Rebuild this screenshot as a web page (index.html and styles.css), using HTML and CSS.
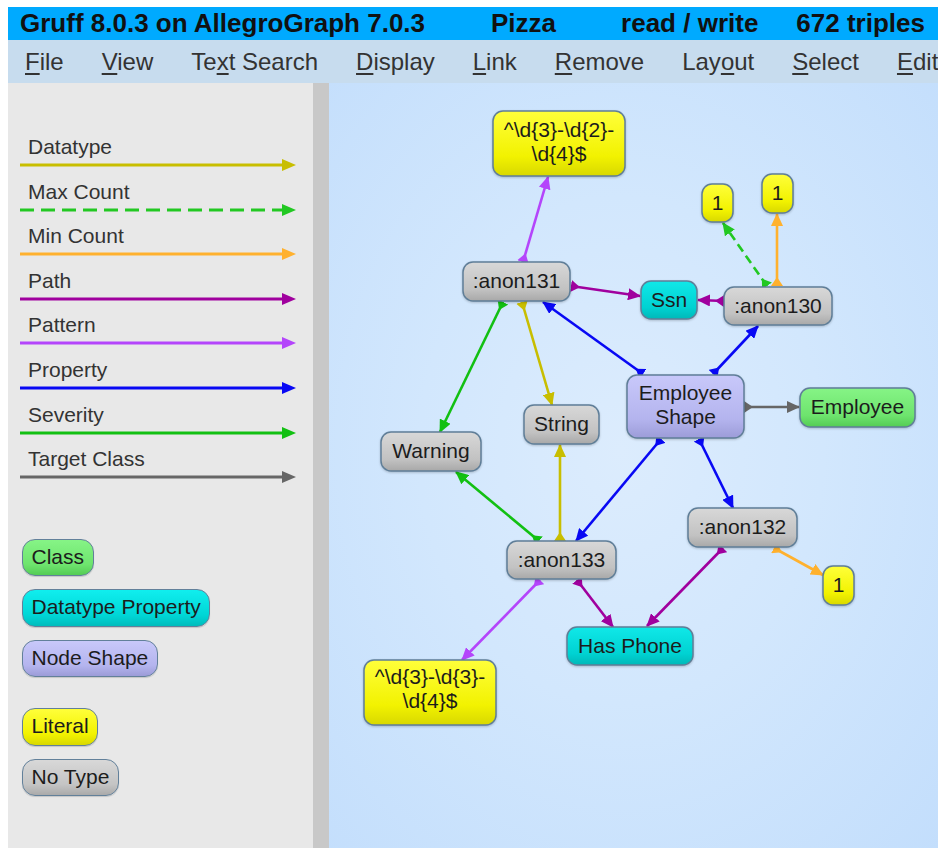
FILE: index.html
```html
<!DOCTYPE html>
<html lang="en">
<head>
    <link rel="stylesheet" href="styles.css">
    <meta charset="UTF-8">
    <title>Gruff - Pizza</title>
</head>
<body>
<div class="app">
    <div class="titlebar">
        <span>Gruff 8.0.3 on AllegroGraph 7.0.3</span>
        <span class="repo">Pizza</span>
        <span class="mode">read / write</span>
        <span class="count">672 triples</span>
    </div>
    <div class="menubar">
        <span><u>F</u>ile</span>
        <span><u>V</u>iew</span>
        <span>Te<u>x</u>t Search</span>
        <span><u>D</u>isplay</span>
        <span><u>L</u>ink</span>
        <span><u>R</u>emove</span>
        <span>Lay<u>o</u>ut</span>
        <span><u>S</u>elect</span>
        <span><u>E</u>dit</span>
    </div>
    <div class="main">
        <div class="legend">
            <div class="edge-key">
                <span>Datatype</span>
                <svg width="278" height="14"><line x1="0" y1="7" x2="264" y2="7" class="k-olive"/><polygon points="262,1 276,7 262,13" class="f-olive"/></svg>
            </div>
            <div class="edge-key">
                <span>Max Count</span>
                <svg width="278" height="14"><line x1="0" y1="7" x2="264" y2="7" class="k-max"/><polygon points="262,1 276,7 262,13" class="f-max"/></svg>
            </div>
            <div class="edge-key">
                <span>Min Count</span>
                <svg width="278" height="14"><line x1="0" y1="7" x2="264" y2="7" class="k-orange"/><polygon points="262,1 276,7 262,13" class="f-orange"/></svg>
            </div>
            <div class="edge-key">
                <span>Path</span>
                <svg width="278" height="14"><line x1="0" y1="7" x2="264" y2="7" class="k-path"/><polygon points="262,1 276,7 262,13" class="f-path"/></svg>
            </div>
            <div class="edge-key">
                <span>Pattern</span>
                <svg width="278" height="14"><line x1="0" y1="7" x2="264" y2="7" class="k-violet"/><polygon points="262,1 276,7 262,13" class="f-violet"/></svg>
            </div>
            <div class="edge-key">
                <span>Property</span>
                <svg width="278" height="14"><line x1="0" y1="7" x2="264" y2="7" class="k-blue"/><polygon points="262,1 276,7 262,13" class="f-blue"/></svg>
            </div>
            <div class="edge-key">
                <span>Severity</span>
                <svg width="278" height="14"><line x1="0" y1="7" x2="264" y2="7" class="k-green"/><polygon points="262,1 276,7 262,13" class="f-green"/></svg>
            </div>
            <div class="edge-key">
                <span>Target Class</span>
                <svg width="278" height="14"><line x1="0" y1="7" x2="264" y2="7" class="k-gray"/><polygon points="262,1 276,7 262,13" class="f-gray"/></svg>
            </div>

            <div class="type-keys">
                <div class="pill p-class">Class</div>
                <div class="pill p-dprop">Datatype Property</div>
                <div class="pill p-shape">Node Shape</div>
                <div class="pill p-lit gap-before">Literal</div>
                <div class="pill p-none">No Type</div>
            </div>
        </div>
        <div class="scrollbar"></div>
        <div class="canvas">
            <svg class="graph" width="609" height="765" viewBox="329 83 609 765">
                <defs>
                    <linearGradient id="g-lit" x1="0" y1="0" x2="0" y2="1"><stop offset="0" stop-color="#ffff3a"/><stop offset="0.7" stop-color="#f2f200"/><stop offset="1" stop-color="#d8d800"/></linearGradient>
                    <linearGradient id="g-none" x1="0" y1="0" x2="0" y2="1"><stop offset="0" stop-color="#d8d8d8"/><stop offset="0.7" stop-color="#c2c2c2"/><stop offset="1" stop-color="#a8a8a8"/></linearGradient>
                    <linearGradient id="g-dprop" x1="0" y1="0" x2="0" y2="1"><stop offset="0" stop-color="#10e8e8"/><stop offset="0.7" stop-color="#00d2d2"/><stop offset="1" stop-color="#00b8b8"/></linearGradient>
                    <linearGradient id="g-shape" x1="0" y1="0" x2="0" y2="1"><stop offset="0" stop-color="#c8c8fa"/><stop offset="0.7" stop-color="#b4b4ee"/><stop offset="1" stop-color="#9c9cd8"/></linearGradient>
                    <linearGradient id="g-class" x1="0" y1="0" x2="0" y2="1"><stop offset="0" stop-color="#86f486"/><stop offset="0.7" stop-color="#6ee46e"/><stop offset="1" stop-color="#54cc54"/></linearGradient>

                    <marker id="a-olive" viewBox="0 0 13 12" refX="12" refY="6" markerWidth="13" markerHeight="12" markerUnits="userSpaceOnUse" orient="auto"><path d="M0,0 L13,6 L0,12 z" fill="#c8be00"/></marker>
                    <marker id="t-olive" viewBox="0 0 9 12" refX="0" refY="6" markerWidth="9" markerHeight="12" markerUnits="userSpaceOnUse" orient="auto"><path d="M0,0 L9,6 L0,12 z" fill="#c8be00"/></marker>
                    <marker id="a-max" viewBox="0 0 13 12" refX="12" refY="6" markerWidth="13" markerHeight="12" markerUnits="userSpaceOnUse" orient="auto"><path d="M0,0 L13,6 L0,12 z" fill="#22c822"/></marker>
                    <marker id="t-max" viewBox="0 0 9 12" refX="0" refY="6" markerWidth="9" markerHeight="12" markerUnits="userSpaceOnUse" orient="auto"><path d="M0,0 L9,6 L0,12 z" fill="#22c822"/></marker>
                    <marker id="a-orange" viewBox="0 0 13 12" refX="12" refY="6" markerWidth="13" markerHeight="12" markerUnits="userSpaceOnUse" orient="auto"><path d="M0,0 L13,6 L0,12 z" fill="#ffb12e"/></marker>
                    <marker id="t-orange" viewBox="0 0 9 12" refX="0" refY="6" markerWidth="9" markerHeight="12" markerUnits="userSpaceOnUse" orient="auto"><path d="M0,0 L9,6 L0,12 z" fill="#ffb12e"/></marker>
                    <marker id="a-path" viewBox="0 0 13 12" refX="12" refY="6" markerWidth="13" markerHeight="12" markerUnits="userSpaceOnUse" orient="auto"><path d="M0,0 L13,6 L0,12 z" fill="#a0009e"/></marker>
                    <marker id="t-path" viewBox="0 0 9 12" refX="0" refY="6" markerWidth="9" markerHeight="12" markerUnits="userSpaceOnUse" orient="auto"><path d="M0,0 L9,6 L0,12 z" fill="#a0009e"/></marker>
                    <marker id="a-violet" viewBox="0 0 13 12" refX="12" refY="6" markerWidth="13" markerHeight="12" markerUnits="userSpaceOnUse" orient="auto"><path d="M0,0 L13,6 L0,12 z" fill="#b445fb"/></marker>
                    <marker id="t-violet" viewBox="0 0 9 12" refX="0" refY="6" markerWidth="9" markerHeight="12" markerUnits="userSpaceOnUse" orient="auto"><path d="M0,0 L9,6 L0,12 z" fill="#b445fb"/></marker>
                    <marker id="a-blue" viewBox="0 0 13 12" refX="12" refY="6" markerWidth="13" markerHeight="12" markerUnits="userSpaceOnUse" orient="auto"><path d="M0,0 L13,6 L0,12 z" fill="#0808f4"/></marker>
                    <marker id="t-blue" viewBox="0 0 9 12" refX="0" refY="6" markerWidth="9" markerHeight="12" markerUnits="userSpaceOnUse" orient="auto"><path d="M0,0 L9,6 L0,12 z" fill="#0808f4"/></marker>
                    <marker id="a-green" viewBox="0 0 13 12" refX="12" refY="6" markerWidth="13" markerHeight="12" markerUnits="userSpaceOnUse" orient="auto"><path d="M0,0 L13,6 L0,12 z" fill="#12c012"/></marker>
                    <marker id="t-green" viewBox="0 0 9 12" refX="0" refY="6" markerWidth="9" markerHeight="12" markerUnits="userSpaceOnUse" orient="auto"><path d="M0,0 L9,6 L0,12 z" fill="#12c012"/></marker>
                    <marker id="a-gray" viewBox="0 0 13 12" refX="12" refY="6" markerWidth="13" markerHeight="12" markerUnits="userSpaceOnUse" orient="auto"><path d="M0,0 L13,6 L0,12 z" fill="#666666"/></marker>
                    <marker id="t-gray" viewBox="0 0 9 12" refX="0" refY="6" markerWidth="9" markerHeight="12" markerUnits="userSpaceOnUse" orient="auto"><path d="M0,0 L9,6 L0,12 z" fill="#666666"/></marker>
                </defs>

                <!-- edges -->
                <line class="e e-violet" x1="523" y1="262" x2="548" y2="177"/>
                <line class="e e-path" x1="571" y1="286" x2="640" y2="296"/>
                <line class="e e-path" x1="724" y1="301" x2="698" y2="300"/>
                <line class="e e-max" x1="767" y1="286" x2="723" y2="223"/>
                <line class="e e-orange" x1="777" y1="286" x2="777" y2="214"/>
                <line class="e e-blue" x1="643" y1="374" x2="543" y2="302"/>
                <line class="e e-blue" x1="713" y1="374" x2="758" y2="326"/>
                <line class="e e-gray" x1="744" y1="407" x2="799" y2="407"/>
                <line class="e e-blue" x1="661" y1="439" x2="576" y2="541"/>
                <line class="e e-blue" x1="699" y1="439" x2="733" y2="508"/>
                <line class="e e-green" x1="503" y1="302" x2="440" y2="432"/>
                <line class="e e-olive" x1="522" y1="302" x2="552" y2="405"/>
                <line class="e e-green" x1="539" y1="541" x2="456" y2="472"/>
                <line class="e e-olive" x1="560" y1="541" x2="560" y2="445"/>
                <line class="e e-violet" x1="540" y1="580" x2="462" y2="660"/>
                <line class="e e-path" x1="577" y1="580" x2="613" y2="627"/>
                <line class="e e-path" x1="723" y1="548" x2="647" y2="626"/>
                <line class="e e-orange" x1="774" y1="548" x2="823" y2="575"/>

                <!-- nodes -->
                <rect class="node n-lit" x="493" y="111" width="132" height="65" rx="10"/>
                <text class="label" x="559" y="137">^\d{3}-\d{2}-</text>
                <text class="label" x="559" y="161">\d{4}$</text>

                <rect class="node n-none" x="463" y="262" width="107" height="39" rx="10"/>
                <text class="label" x="516.5" y="288">:anon131</text>

                <rect class="node n-dprop" x="641" y="281" width="56" height="38" rx="10"/>
                <text class="label" x="669" y="307">Ssn</text>

                <rect class="node n-none" x="724" y="287" width="108" height="38" rx="10"/>
                <text class="label" x="778" y="313">:anon130</text>

                <rect class="node n-lit" x="702" y="184" width="31" height="38" rx="10"/>
                <text class="label" x="717.5" y="210">1</text>

                <rect class="node n-lit" x="762" y="174" width="31" height="39" rx="10"/>
                <text class="label" x="777.5" y="200">1</text>

                <rect class="node n-shape" x="627" y="375" width="117" height="63" rx="10"/>
                <text class="label" x="685.5" y="400">Employee</text>
                <text class="label" x="685.5" y="424">Shape</text>

                <rect class="node n-class" x="800" y="388" width="115" height="39" rx="10"/>
                <text class="label" x="857.5" y="414">Employee</text>

                <rect class="node n-none" x="524" y="405" width="75" height="39" rx="10"/>
                <text class="label" x="561.5" y="431">String</text>

                <rect class="node n-none" x="381" y="432" width="100" height="39" rx="10"/>
                <text class="label" x="431" y="458">Warning</text>

                <rect class="node n-none" x="507" y="541" width="109" height="38" rx="10"/>
                <text class="label" x="561.5" y="567">:anon133</text>

                <rect class="node n-none" x="688" y="508" width="109" height="39" rx="10"/>
                <text class="label" x="742.5" y="534">:anon132</text>

                <rect class="node n-lit" x="823" y="566" width="31" height="39" rx="10"/>
                <text class="label" x="838.5" y="592">1</text>

                <rect class="node n-dprop" x="567" y="627" width="126" height="38" rx="10"/>
                <text class="label" x="630" y="653">Has Phone</text>

                <rect class="node n-lit" x="364" y="660" width="132" height="65" rx="10"/>
                <text class="label" x="430" y="684">^\d{3}-\d{3}-</text>
                <text class="label" x="430" y="708">\d{4}$</text>
            </svg>
        </div>
    </div>
</div>
</body>
</html>
```

FILE: styles.css
```css
body {
    margin: 7px 8px 0;
    font-family: "Liberation Sans", Arial, sans-serif;
    overflow: hidden;
}

.app {
    height: 841px;
    display: flex;
    flex-direction: column;
}

.titlebar {
    height: 33px;
    flex-shrink: 0;
    display: flex;
    align-items: center;
    padding-left: 12px;
    background-color: #00aaff;
    color: #111;
    font-size: 26px;
    font-weight: bold;
    white-space: nowrap;
    overflow: hidden;
}

.titlebar .repo {
    margin-left: 66px;
}

.titlebar .mode {
    margin-left: 65px;
}

.titlebar .count {
    margin-left: 38px;
}

.menubar {
    height: 43px;
    flex-shrink: 0;
    display: flex;
    align-items: center;
    gap: 38px;
    padding-left: 17px;
    background-color: #c7dcee;
    color: #333;
    font-size: 24px;
    white-space: nowrap;
    overflow: hidden;
}

.menubar u {
    text-underline-offset: 3px;
}

.main {
    flex: 1;
    display: flex;
    min-height: 0;
}

.legend {
    width: 305px;
    flex-shrink: 0;
    box-sizing: border-box;
    padding: 52px 0 0 12px;
    background-color: #e8e8e8;
}

.edge-key {
    height: 44.6px;
}

.edge-key span {
    display: block;
    margin-left: 8px;
    line-height: 24px;
    font-size: 21px;
    color: #333;
}

.edge-key svg {
    display: block;
    margin-top: -1px;
}

.edge-key line {
    stroke-width: 3;
}

.k-olive { stroke: #c8be00; }
.k-max { stroke: #22c822; stroke-dasharray: 14 7; }
.k-orange { stroke: #ffb12e; }
.k-path { stroke: #a0009e; }
.k-violet { stroke: #b445fb; }
.k-blue { stroke: #0808f4; }
.k-green { stroke: #12c012; }
.k-gray { stroke: #666666; }

.f-olive { fill: #c8be00; }
.f-max { fill: #22c822; }
.f-orange { fill: #ffb12e; }
.f-path { fill: #a0009e; }
.f-violet { fill: #b445fb; }
.f-blue { fill: #0808f4; }
.f-green { fill: #12c012; }
.f-gray { fill: #666666; }

.type-keys {
    margin: 47px 0 0 2px;
    display: flex;
    flex-direction: column;
    align-items: flex-start;
    gap: 13px;
}

.pill {
    height: 37.5px;
    box-sizing: border-box;
    padding: 0 8.5px;
    border: 1.5px solid #62809a;
    border-radius: 13px;
    line-height: 34.5px;
    font-size: 21px;
    color: #1c1c1c;
    box-shadow: 0 1px 1px rgba(0, 0, 0, 0.15);
}

.gap-before {
    margin-top: 18px;
}

.p-class { background: linear-gradient(#86f486, #6ee46e 70%, #54cc54); }
.p-dprop { background: linear-gradient(#10eeee, #00d6d6 70%, #00bcbc); }
.p-shape { background: linear-gradient(#c8c8fa, #b4b4ee 70%, #9c9cd8); }
.p-lit { background: linear-gradient(#ffff3a, #f2f200 70%, #d8d800); }
.p-none { background: linear-gradient(#d8d8d8, #c4c4c4 70%, #aaaaaa); }

.scrollbar {
    width: 16px;
    flex-shrink: 0;
    background-color: #c8c8c8;
}

.canvas {
    flex: 1;
    overflow: hidden;
    background: radial-gradient(ellipse at 48% 48%, #dcecfd 0%, #d2e7fd 45%, #c3defc 100%);
}

.graph {
    display: block;
}

.e {
    stroke-width: 2.6;
}

.e-olive { stroke: #c8be00; marker-start: url(#t-olive); marker-end: url(#a-olive); }
.e-max { stroke: #22c822; stroke-dasharray: 9 5; marker-start: url(#t-max); marker-end: url(#a-max); }
.e-orange { stroke: #ffb12e; marker-start: url(#t-orange); marker-end: url(#a-orange); }
.e-path { stroke: #a0009e; marker-start: url(#t-path); marker-end: url(#a-path); }
.e-violet { stroke: #b445fb; marker-start: url(#t-violet); marker-end: url(#a-violet); }
.e-blue { stroke: #0808f4; marker-start: url(#t-blue); marker-end: url(#a-blue); }
.e-green { stroke: #12c012; marker-start: url(#t-green); marker-end: url(#a-green); }
.e-gray { stroke: #666666; marker-start: url(#t-gray); marker-end: url(#a-gray); }

.node {
    stroke: #5f7e98;
    stroke-width: 1.5;
    filter: drop-shadow(0 1px 1px rgba(0, 0, 0, 0.2));
}

.n-lit { fill: url(#g-lit); }
.n-none { fill: url(#g-none); }
.n-dprop { fill: url(#g-dprop); }
.n-shape { fill: url(#g-shape); }
.n-class { fill: url(#g-class); }

.label {
    font-family: "Liberation Sans", Arial, sans-serif;
    font-size: 21px;
    fill: #1c1c1c;
    text-anchor: middle;
}
```
